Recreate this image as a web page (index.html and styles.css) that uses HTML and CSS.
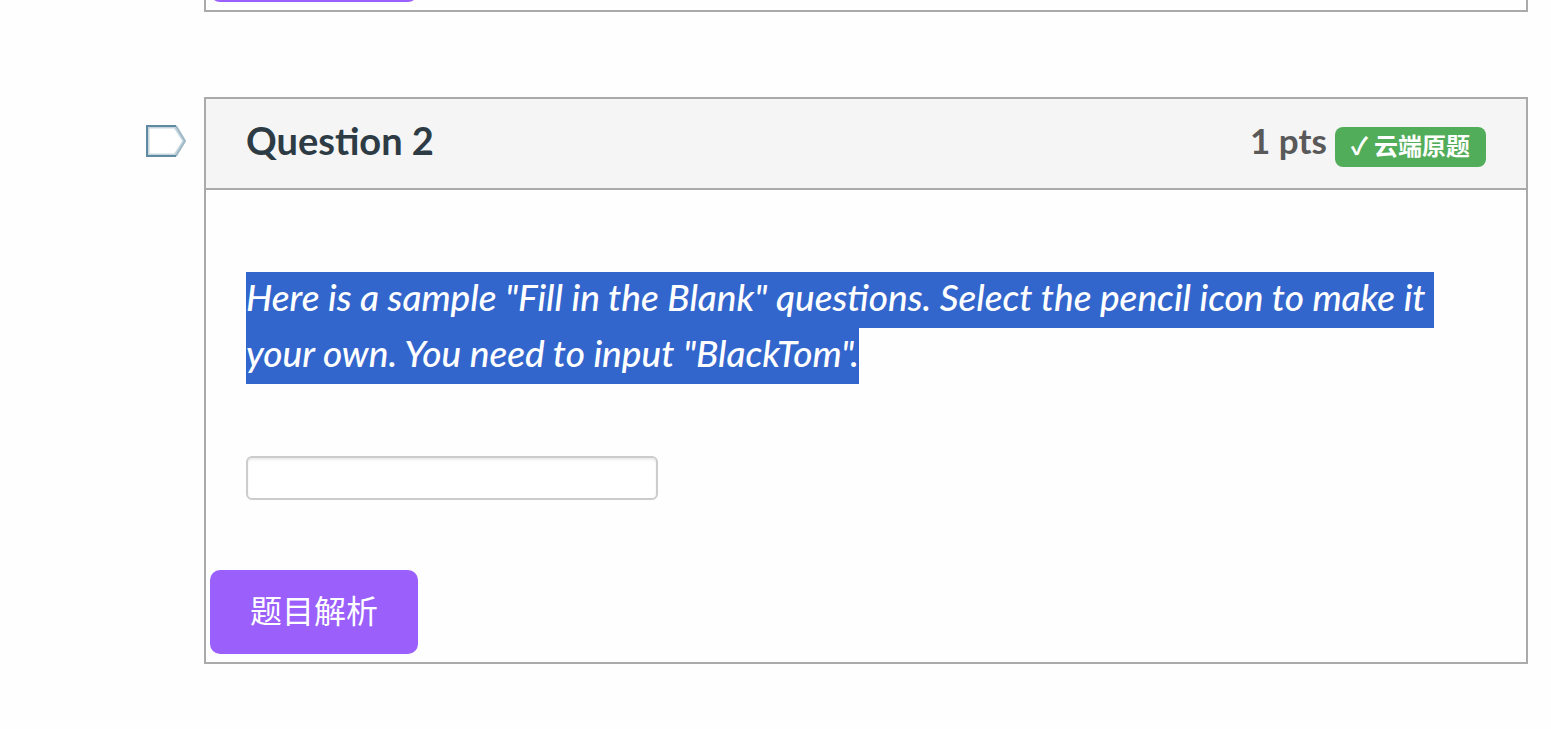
FILE: index.html
```html
<!DOCTYPE html>
<html lang="en">
<head>
  <meta charset="UTF-8">
  <meta name="viewport" content="width=device-width, initial-scale=1.0">
  <title>Quiz</title>
  <link rel="stylesheet" href="styles.css">
</head>
<body>
  <main class="quiz">

    <section class="question question-prev">
      <button class="analysis" type="button" aria-label="题目解析"></button>
    </section>

    <div class="question-row">
      <a class="flag" href="#question2" aria-label="Flag question 2">
        <svg width="40" height="32" viewBox="0 0 40 32" fill="none">
          <path d="M2 2H29L38 16L29 30H2Z" fill="#fff" stroke="#c5d5de" stroke-width="3"/>
          <path d="M30 1L39 16L30 31" stroke="#9fb8c6" stroke-width="2"/>
          <path d="M30 1H1V31H30" stroke="#5f8aa2" stroke-width="2"/>
        </svg>
      </a>

      <section class="question" id="question2">
        <header class="question-header">
          <h2 class="question-name">Question 2</h2>
          <div class="points">
            <span>1 pts</span>
            <span class="badge">✓ 云端原题</span>
          </div>
        </header>

        <div class="question-body">
          <p class="question-text" id="question2-text"><em class="selected">Here is a sample "Fill in the Blank" questions. Select the pencil icon to make it&nbsp;<wbr>your own. You need to input "BlackTom".</em></p>
          <input class="answer" type="text" aria-labelledby="question2-text">
        </div>

        <button class="analysis" type="button">题目解析</button>
      </section>
    </div>

  </main>
</body>
</html>
```

FILE: styles.css
```css
* {
  box-sizing: border-box;
}

body {
  margin: 0;
  background-color: #fefefe;
  color: #2d3b45;
  font-family: Lato, "Noto Sans CJK SC", sans-serif;
  font-size: 37px;
  line-height: 56px;
}

.quiz {
  padding: 0 23px 65px 146px;
}

.question-row {
  display: flex;
  align-items: flex-start;
  gap: 18px;
}

.question {
  flex: 1;
  border: 2px solid #aaa;
  padding: 0 4px 8px;
}

/* the end of question 1, scrolled past the top */
.question-prev {
  margin: -84px 0 85px 58px;
}

.flag {
  display: block;
  width: 40px;
  height: 32px;
  margin-top: 28px;
}

.flag svg {
  display: block;
}

.question-header {
  display: flex;
  justify-content: space-between;
  align-items: flex-start;
  margin: 0 -4px;
  padding: 13px 40px 20px;
  background-color: #f5f5f5;
  border-bottom: 2px solid #aaa;
}

.question-name {
  margin: 0;
  font-size: 38px;
  font-weight: 700;
}

.points {
  display: flex;
  gap: 8px;
  color: #595959;
  font-size: 35px;
  font-weight: 700;
}

.badge {
  height: 40px;
  margin-top: 15px;
  padding: 0 16px;
  border-radius: 8px;
  background-color: #52ad5a;
  color: #fff;
  font-size: 24px;
  line-height: 38px;
}

.question-body {
  padding: 79px 36px 70px;
}

.question-text {
  margin: 0 0 75px;
  font-weight: 500;
}

.selected {
  padding: 2px 0 9px;
  background-color: #36c;
  color: #fff;
}

.answer {
  display: block;
  width: 412px;
  height: 44px;
  padding: 4px 8px;
  border: 2px solid #ccc;
  border-radius: 6px;
  background-color: #fff;
  box-shadow: inset 0 2px 2px rgba(0, 0, 0, 0.08);
  font: inherit;
  font-size: 28px;
}

.analysis {
  display: block;
  min-width: 208px;
  min-height: 84px;
  padding: 13px 38px 15px;
  border: 0;
  border-radius: 10px;
  background-color: #9b60fb;
  color: #fff;
  font: inherit;
  font-size: 32px;
  line-height: 56px;
}
```
